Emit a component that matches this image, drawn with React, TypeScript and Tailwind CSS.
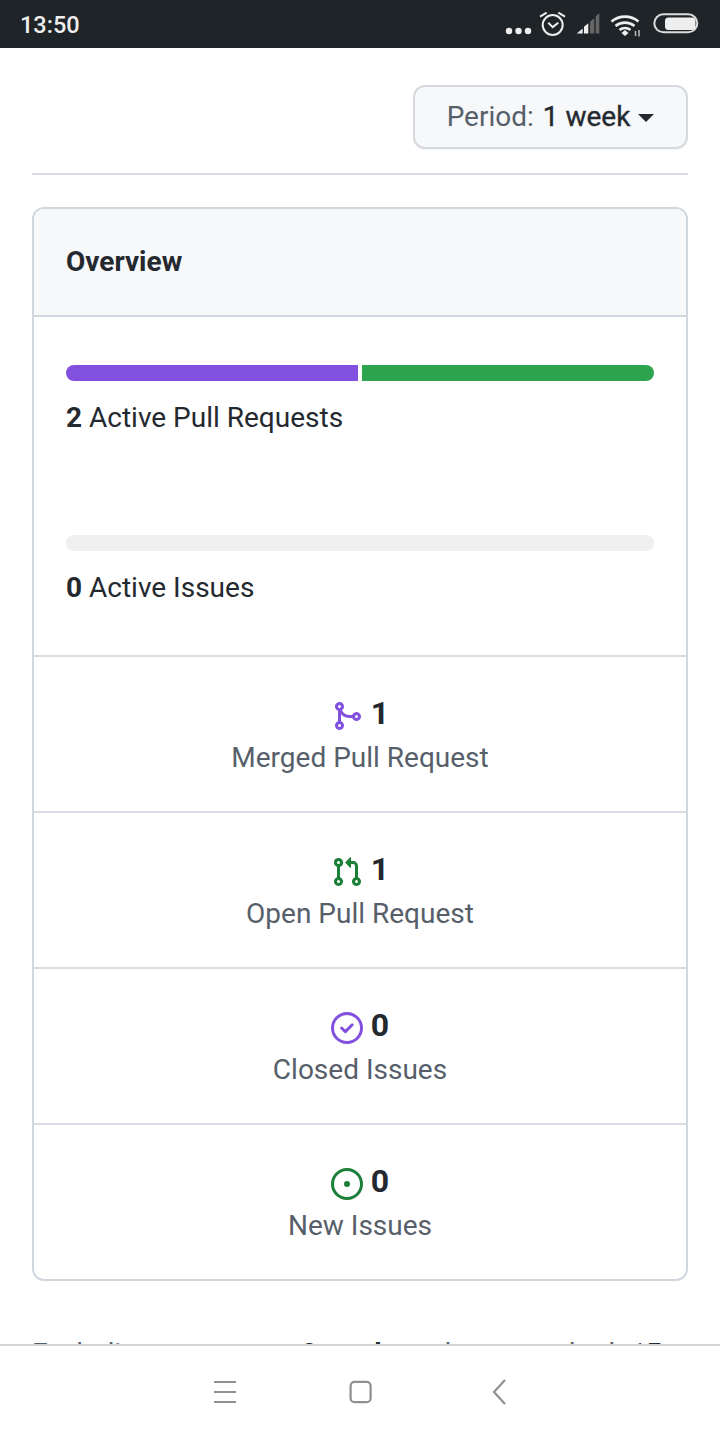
export default function App() {
  const rows = [
    {
      n: "1",
      label: "Merged Pull Request",
      color: "text-[#8250df]",
      paths: ["M5.45 5.154A4.25 4.25 0 0 0 9.25 7.5h1.378a2.251 2.251 0 1 1 0 1.5H9.25A5.734 5.734 0 0 1 5 7.123v3.505a2.25 2.25 0 1 1-1.5 0V5.372a2.25 2.25 0 1 1 1.95-.218ZM4.25 13.5a.75.75 0 1 0 0-1.5.75.75 0 0 0 0 1.5Zm8.5-4.5a.75.75 0 1 0 0-1.5.75.75 0 0 0 0 1.5ZM5 3.25a.75.75 0 1 0 0 .005V3.25Z"],
      check: false,
    },
    {
      n: "1",
      label: "Open Pull Request",
      color: "text-[#1a7f37]",
      paths: ["M1.5 3.25a2.25 2.25 0 1 1 3 2.122v5.256a2.251 2.251 0 1 1-1.5 0V5.372A2.25 2.25 0 0 1 1.5 3.25Zm5.677-.177L9.573.677A.25.25 0 0 1 10 .854V2.5h1A2.5 2.5 0 0 1 13.5 5v5.628a2.251 2.251 0 1 1-1.5 0V5a1 1 0 0 0-1-1h-1v1.646a.25.25 0 0 1-.427.177L7.177 3.427a.25.25 0 0 1 0-.354ZM3.75 2.5a.75.75 0 1 0 0 1.5.75.75 0 0 0 0-1.5Zm0 9.5a.75.75 0 1 0 0 1.5.75.75 0 0 0 0-1.5Zm8.25.75a.75.75 0 1 0 1.5 0 .75.75 0 0 0-1.5 0Z"],
      check: false,
    },
    {
      n: "0",
      label: "Closed Issues",
      color: "text-[#8250df]",
      paths: ["M8 0a8 8 0 1 1 0 16A8 8 0 0 1 8 0ZM1.5 8a6.5 6.5 0 1 0 13 0 6.5 6.5 0 0 0-13 0Z"],
      check: true,
    },
    {
      n: "0",
      label: "New Issues",
      color: "text-[#1a7f37]",
      paths: ["M8 9.5a1.5 1.5 0 1 0 0-3 1.5 1.5 0 0 0 0 3Z", "M8 0a8 8 0 1 1 0 16A8 8 0 0 1 8 0ZM1.5 8a6.5 6.5 0 1 0 13 0 6.5 6.5 0 0 0-13 0Z"],
      check: false,
    },
  ];

  return (
    <div className="flex h-[1440px] w-[720px] flex-col overflow-hidden bg-white font-['Roboto',sans-serif] text-[#24292f]">
      <div className="flex h-12 shrink-0 items-center justify-between bg-[#1f2428] pl-[20px] pr-[21px] text-[#eeeeee]">
        <span className="mt-[4px] text-[23.5px] font-medium leading-none">13:50</span>
        <svg width="194" height="48" viewBox="505 0 194 48" fill="none">
          <circle cx="509" cy="31" r="3.200" fill="#eee" />
          <circle cx="518.500" cy="31" r="3.200" fill="#eee" />
          <circle cx="528" cy="31" r="3.200" fill="#eee" />
          <circle cx="552.700" cy="25" r="10" stroke="#eee" strokeWidth="2" />
          <path d="M548.300 22.700l4.400 4.400 5.600-4.400" stroke="#eee" strokeWidth="2" />
          <path d="M540 16.700l6.700-4M558.300 12.700l6.700 4" stroke="#eee" strokeWidth="2" />
          <path d="M576.700 33.500h6v-5z" fill="#eee" />
          <path d="M584 33.500h4.300V23.300l-4.300 3.500z" fill="#eee" />
          <path d="M590 33.500h4.300V18.300l-4.300 3.500z" fill="#666" />
          <path d="M595.700 33.500h3.600V13.300l-3.600 3z" fill="#666" />
          <path d="M611.500 21.500a21 21 0 0 1 27 0M615.500 26a15 15 0 0 1 19 0M619.500 30a8.500 8.500 0 0 1 11 0" stroke="#eee" strokeWidth="2.600" />
          <path d="M621.500 33l3.500-3 3.500 3-3.500 3z" fill="#eee" />
          <path d="M635.500 31v5M639 30v6.500" stroke="#bbb" strokeWidth="1.500" />
          <rect x="654.300" y="14.300" width="43" height="18" rx="9" stroke="#ddd" strokeWidth="2" />
          <rect x="665" y="17.500" width="30.500" height="12.500" rx="3.500" fill="#eee" />
        </svg>
      </div>

      <main className="min-h-0 flex-1 overflow-hidden px-8">
        <div className="flex justify-end pt-[37px]">
          <div className="flex h-16 w-[275px] items-center justify-center gap-[8px] rounded-xl border-2 border-[#d5d9dd] bg-[#f6f8fa] text-[28px] shadow-[0_1px_0_rgba(27,31,36,0.04)]">
            <span>
              <span className="text-[#57606a]">Period:</span>{" "}
              <span className="ml-[2px] [-webkit-text-stroke:0.35px_#24292f]">1 week</span>
            </span>
            <span className="mt-[2px] h-0 w-0 border-x-[8px] border-t-[8px] border-x-transparent border-t-[#24292f]" />
          </div>
        </div>
        <div className="mt-6 h-[2px] bg-[#d8dee4]" />

        <section className="mt-8 overflow-hidden rounded-xl border-2 border-[#d0d7de]">
          <div className="flex h-[108px] items-center border-b-2 border-[#d0d7de] bg-[#f6f8fa] px-8 pb-[1px]">
            <h2 className="text-[28px] font-bold leading-none">Overview</h2>
          </div>
          <div className="h-[340px] border-b-2 border-[#d8dee4] px-8 pt-12">
            <div className="flex h-4 gap-1 overflow-hidden rounded-lg">
              <div className="flex-1 bg-[#8250df]" />
              <div className="flex-1 bg-[#2da44e]" />
            </div>
            <p className="mt-[17px] text-[28px] leading-[40px]">
              <b className="font-bold">2</b> Active Pull Requests
            </p>
            <div className="mt-[97px] h-4 rounded-lg bg-[#f0f0f0]" />
            <p className="mt-[17px] text-[28px] leading-[40px]">
              <b className="font-bold">0</b> Active Issues
            </p>
          </div>
          {rows.map((r, i) => (
            <div
              key={r.label}
              className={
                i < rows.length - 1
                  ? "flex h-[156px] flex-col items-center border-b-2 border-[#d8dee4] pt-[34px]"
                  : "flex h-[154px] flex-col items-center pt-[34px]"
              }
            >
              <div className="flex h-[45px] items-center gap-[8px]">
                <svg width="32" height="32" viewBox="0 0 16 16" fill="currentColor" className={`mt-[4px] ${r.color}`}>
                  {r.paths.map((d) => (
                    <path key={d} d={d} />
                  ))}
                  {r.check && (
                    <path
                      d="M5.300 8L7.200 9.800L10.600 6.400"
                      fill="none"
                      stroke="currentColor"
                      strokeWidth="1.500"
                      strokeLinecap="round"
                      strokeLinejoin="round"
                    />
                  )}
                </svg>
                <span className="mb-[2px] text-[32px] font-bold leading-none">{r.n}</span>
              </div>
              <span className="text-[28px] leading-[44px] text-[#57606a]">{r.label}</span>
            </div>
          ))}
        </section>

        <p className="mt-[53px] flex whitespace-nowrap text-[28px] leading-[40px] text-[#57606a]">
          <span>Excluding merges,</span>
          <b className="ml-[43px] font-bold text-[#24292f]">2</b>
          <b className="ml-[17px] font-bold text-[#24292f]">authors</b>
          <span className="ml-[14px]">have</span>
          <span className="ml-[20px]">pushed</span>
          <b className="ml-[15px] font-bold text-[#24292f]">15</b>
        </p>
      </main>

      <nav className="flex h-[96px] shrink-0 items-center justify-center border-t-2 border-[#d4d4d4] bg-white">
        <svg width="300" height="32" viewBox="0 0 300 32" fill="none" stroke="#909090" strokeWidth="2.200">
          <path d="M4 5h22M4 15h22M4 25h22" />
          <rect x="140.600" y="4.800" width="20" height="20.400" rx="4" />
          <path d="M295 3l-11 12 11 12" />
        </svg>
      </nav>
    </div>
  );
}
